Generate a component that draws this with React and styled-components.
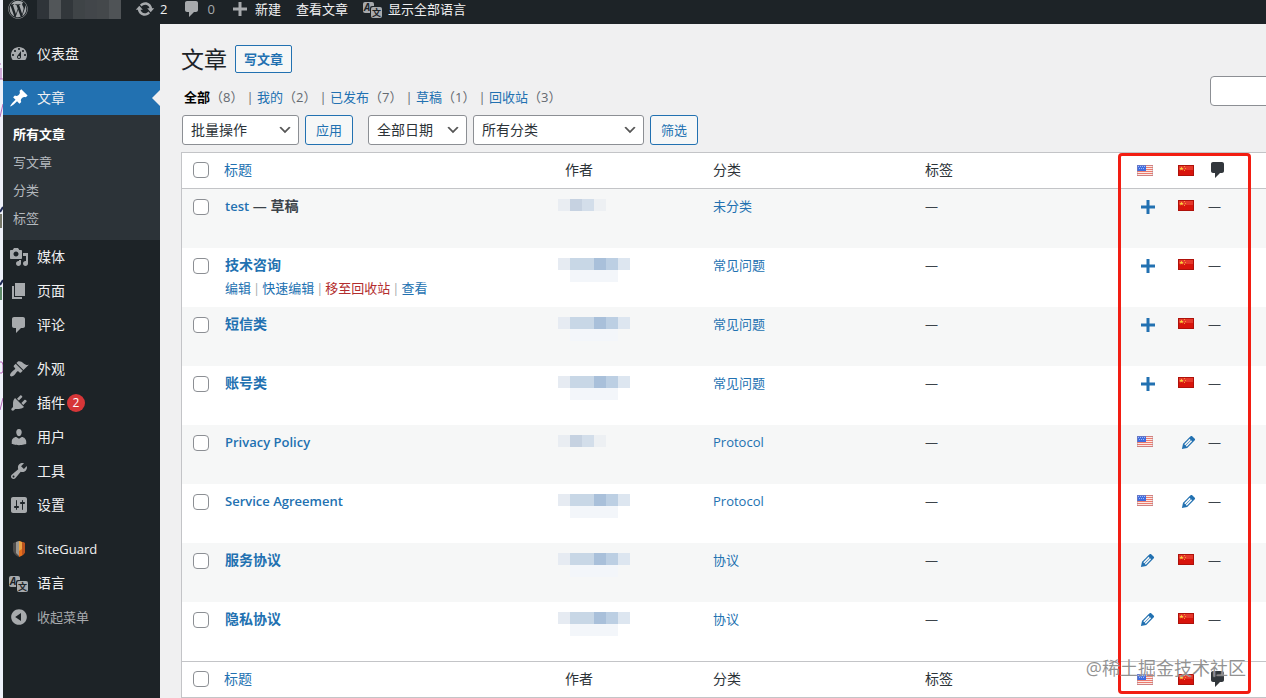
import React from 'react';
import styled, { createGlobalStyle } from 'styled-components';
import { FaWordpress } from 'react-icons/fa';

const GlobalStyle = createGlobalStyle`
  * {
    box-sizing: border-box;
  }

  body {
    margin: 0;
    background: #f0f0f1;
    color: #3c434a;
    font-family: 'Open Sans', 'Noto Sans CJK SC', sans-serif;
    font-size: 13px;
    line-height: 18px;
    overflow: hidden;
  }

  a {
    color: #2271b1;
    text-decoration: none;
  }
`;

const Page = styled.div`
  position: relative;
  min-height: 100vh;
  display: flex;
  flex-direction: column;
  border-left: 3px solid #eef1fa;
`;

const EdgeMarks = styled.svg`
  position: absolute;
  left: -3px;
  top: 0;
`;

/* admin bar */

const AdminBar = styled.header`
  height: 24px;
  padding: 0 5px 6px;
  display: flex;
  align-items: center;
  background: #1d2327;
`;

const BarLink = styled.a`
  display: flex;
  align-items: center;
  gap: 5px;
  height: 18px;
  margin-right: 15px;
  color: ${(props) => (props.$dim ? '#a7aaad' : '#f0f0f1')};
  white-space: nowrap;
`;

const SiteName = styled.div`
  display: flex;
  height: 20px;
  margin: 0 14px 0 9px;
`;

const SiteBlock = styled.span`
  width: 12px;
  height: 20px;
  background: ${(props) => props.$color};
`;

/* side menu */

const Body = styled.div`
  flex: 1;
  display: flex;
`;

const Sidebar = styled.nav`
  flex: none;
  width: 157px;
  padding-top: 13px;
  background: #1d2327;
`;

const MenuGroup = styled.div`
  margin-bottom: 10px;
`;

const MenuLink = styled.a`
  position: relative;
  display: flex;
  align-items: center;
  gap: 8px;
  height: 34px;
  padding: 0 0 1px 6px;
  font-size: ${(props) => (props.$small ? '13px' : '14px')};
  color: ${(props) => (props.$dim ? '#a7aaad' : '#f0f0f1')};
  background: ${(props) => (props.$active ? '#2271b1' : 'transparent')};

  svg {
    color: ${(props) => (props.$active ? '#fff' : '#a7aaad')};
  }

  &::after {
    content: '';
    display: ${(props) => (props.$active ? 'block' : 'none')};
    position: absolute;
    right: 0;
    top: 9px;
    border: 8px solid transparent;
    border-left: 0;
    border-right-color: #f0f0f1;
  }
`;

const MenuIcon = styled.span`
  display: flex;
  width: 20px;
  height: 20px;
  align-items: center;
  justify-content: center;
`;

const Badge = styled.span`
  width: 18px;
  height: 18px;
  margin-left: -6px;
  border-radius: 9px;
  background: #d63638;
  color: #fff;
  font-size: 12px;
  text-align: center;
`;

const SubMenu = styled.div`
  padding: 5px 0 8px;
  background: #2c3338;
`;

const SubLink = styled.a`
  display: block;
  padding: 5px 10px;
  color: ${(props) => (props.$current ? '#fff' : '#b4b9be')};
  font-weight: ${(props) => (props.$current ? 700 : 400)};
`;

/* content */

const Content = styled.main`
  flex: 1;
  min-width: 0;
  padding: 21px 0 0 21px;
`;

const TitleRow = styled.div`
  display: flex;
  align-items: center;
  gap: 8px;
  height: 28px;
`;

const Heading = styled.h1`
  margin: 0;
  color: #1d2327;
  font-size: 23px;
  font-weight: 400;
  line-height: 28px;
`;

const Button = styled.button`
  height: ${(props) => (props.$small ? '28px' : '30px')};
  padding: 0 ${(props) => (props.$small ? '8px' : '10px')};
  border: 1px solid #2271b1;
  border-radius: ${(props) => (props.$small ? '2px' : '3px')};
  background: #f6f7f7;
  color: #2271b1;
  font-family: inherit;
  font-size: 13px;
  font-weight: ${(props) => (props.$small ? 600 : 400)};
  line-height: 18px;
`;

const ViewsRow = styled.div`
  display: flex;
  align-items: flex-end;
  justify-content: space-between;
  height: 30px;
  margin-top: 3px;
  overflow: hidden;
`;

const Views = styled.ul`
  display: flex;
  gap: 3px;
  margin: 0;
  padding: 0 0 0 3px;
  list-style: none;
  color: #646970;

  b {
    color: #000;
  }
`;

const SearchInput = styled.input`
  width: 64px;
  height: 30px;
  margin-right: -8px;
  border: 1px solid #8c8f94;
  border-radius: 4px;
  background: #fff;
`;

const Filters = styled.div`
  display: flex;
  gap: 6px;
  margin: 9px 0 7px 1px;
`;

const Select = styled.select`
  width: ${(props) => props.$width};
  height: 30px;
  margin-left: ${(props) => (props.$spaced ? '9px' : '0')};
  padding: 0 24px 1px 8px;
  appearance: none;
  border: 1px solid #8c8f94;
  border-radius: 3px;
  background: #fff
    url("data:image/svg+xml,%3Csvg width='20' height='20' xmlns='http://www.w3.org/2000/svg'%3E%3Cpath d='M5 6l5 5 5-5 2 1-7 7-7-7 2-1z' fill='%23555'/%3E%3C/svg%3E")
    no-repeat right 5px center / 16px 16px;
  color: #2c3338;
  font-family: inherit;
  font-size: 14px;
`;

const TableWrap = styled.div`
  position: relative;
`;

const Table = styled.table`
  width: 100%;
  table-layout: fixed;
  border-collapse: separate;
  border-spacing: 0;
  border: 1px solid #c3c4c7;
  border-right: 0;
  background: #fff;
`;

const Head = styled.th`
  width: ${(props) => props.$width || 'auto'};
  height: 36px;
  padding: 0 0 1px 10px;
  border-bottom: ${(props) => (props.$foot ? '0' : '1px solid #c3c4c7')};
  border-top: ${(props) => (props.$foot ? '1px solid #c3c4c7' : '0')};
  color: #2c3338;
  font-size: 14px;
  font-weight: 400;
  text-align: left;
  vertical-align: middle;

  &:first-child {
    padding-left: 11px;
  }

  svg {
    display: block;
  }
`;

const Row = styled.tr`
  height: 59px;

  &:nth-child(odd) {
    background: #f6f7f7;
  }
`;

const Cell = styled.td`
  padding: ${(props) => props.$pad || '8px 0 0 10px'};
  vertical-align: top;

  svg {
    display: block;
  }
`;

const TitleCell = styled(Cell)`
  padding-left: 11px;
  font-size: 14px;
  font-weight: 600;
`;

const TitleLink = styled.a`
  font-size: ${(props) => (props.$latin ? '13px' : '14px')};
`;

const RowActions = styled.div`
  display: flex;
  gap: 2px;
  margin-top: 5px;
  color: #a7aaad;
  font-size: 13px;
  font-weight: 400;
  white-space: nowrap;
`;

const TrashLink = styled.a`
  color: #b32d2e;
`;

const CheckBox = styled.input`
  display: block;
  width: 16px;
  height: 16px;
  margin: 0;
  appearance: none;
  border: 1px solid #8c8f94;
  border-radius: 4px;
  background: #fff;
`;

const Mosaic = styled.div`
  display: flex;
  margin-left: -7px;
`;

const MosaicBlock = styled.span`
  width: 12px;
  height: 12px;
  background: ${(props) => props.$color};
  box-shadow: 0 12px 0 ${(props) => props.$shade};
`;

const Highlight = styled.div`
  position: absolute;
  top: 1px;
  right: 15px;
  bottom: 4px;
  width: 133px;
  border: 3px solid #f21d12;
  border-radius: 4px;
  pointer-events: none;
`;

const Watermark = styled.div`
  position: absolute;
  right: 20px;
  bottom: 17px;
  color: rgba(110, 110, 110, 0.75);
  font-size: 18px;
  line-height: 26px;
  text-shadow: 0 0 1px #fff;
`;

const iconPaths = {
  dashboard:
    'M3.76 16h12.48c1.1-1.37 1.76-3.11 1.76-5 0-4.42-3.58-8-8-8s-8 3.58-8 8c0 1.89.66 3.63 1.76 5zM10 4c.55 0 1 .45 1 1s-.45 1-1 1-1-.45-1-1 .45-1 1-1zM6 6c.55 0 1 .45 1 1s-.45 1-1 1-1-.45-1-1 .45-1 1-1zm8 0c.55 0 1 .45 1 1s-.45 1-1 1-1-.45-1-1 .45-1 1-1zm-5.37 5.55L12 7v6c0 1.1-.9 2-2 2s-2-.9-2-2c0-.57.24-1.08.63-1.45zM4 10c.55 0 1 .45 1 1s-.45 1-1 1-1-.45-1-1 .45-1 1-1zm12 0c.55 0 1 .45 1 1s-.45 1-1 1-1-.45-1-1 .45-1 1-1zm-5 3c0-.55-.45-1-1-1s-1 .45-1 1 .45 1 1 1 1-.45 1-1z',
  post: 'M10.44 3.02l1.82-1.82 6.36 6.35-1.83 1.82c-1.05-.68-2.48-.57-3.41.36l-.75.75c-.92.93-1.04 2.35-.35 3.41l-1.83 1.82-2.41-2.41-2.8 2.79c-.42.42-3.38 2.71-3.8 2.29s1.86-3.39 2.28-3.81l2.79-2.79L4.1 9.36l1.83-1.82c1.05.69 2.48.57 3.4-.36l.75-.75c.93-.92 1.05-2.35.36-3.41z',
  media:
    'M13 11V4c0-.55-.45-1-1-1h-1.67L9 1H5L3.67 3H2c-.55 0-1 .45-1 1v7c0 .55.45 1 1 1h10c.55 0 1-.45 1-1zM7 4.5c1.38 0 2.5 1.12 2.5 2.5S8.38 9.5 7 9.5 4.5 8.38 4.5 7 5.62 4.5 7 4.5zM14 6h5v10.5c0 1.38-1.12 2.5-2.5 2.5S14 17.88 14 16.5s1.12-2.5 2.5-2.5c.17 0 .34.02.5.05V9h-3V6zm-4 8.05V13h2v3.5c0 1.38-1.12 2.5-2.5 2.5S7 17.88 7 16.5 8.12 14 9.5 14c.17 0 .34.02.5.05z',
  page: 'M6 15V2h10v13H6zm-1 1h8v2H3V5h2v11z',
  comment:
    'M5 2h9c1.1 0 2 .9 2 2v7c0 1.1-.9 2-2 2h-2l-5 5v-5H5c-1.1 0-2-.9-2-2V4c0-1.1.9-2 2-2z',
  appearance:
    'M14.48 11.06L7.41 3.99l1.5-1.5c.5-.56 2.3-.47 3.51.32 1.21.8 1.43 1.28 2.91 2.1 1.18.64 2.45 1.26 4.45.85zm-.71.71L6.7 4.7 4.93 6.47c-.39.39-.39 1.02 0 1.41l1.06 1.06c.39.39.39 1.03 0 1.42-.6.6-1.43 1.11-2.21 1.69-.35.26-.7.53-1.01.84C1.43 14.23.4 16.08 1.4 17.07c.99 1 2.84-.03 4.18-1.36.31-.31.58-.66.85-1.02.57-.78 1.08-1.61 1.69-2.21.39-.39 1.02-.39 1.41 0l1.06 1.06c.39.39 1.02.39 1.41 0z',
  plugins:
    'M13.11 4.36L9.87 7.6 8 5.73l3.24-3.24c.35-.34 1.05-.2 1.56.32.52.51.66 1.21.31 1.55zm-8 1.77l.91-1.12 9.01 9.01-1.19.84c-.71.71-2.63 1.16-3.82 1.16H6.14L4.9 17.26c-.59.59-1.54.59-2.12 0-.59-.58-.59-1.53 0-2.12l1.24-1.24v-3.88c0-1.13.4-3.19 1.09-3.89zm7.26 3.97l3.24-3.24c.34-.35 1.04-.21 1.55.31.52.51.66 1.21.31 1.55l-3.24 3.25z',
  users:
    'M10 9.25c-2.27 0-2.73-3.44-2.73-3.44C7 4.02 7.82 2 9.97 2c2.16 0 2.98 2.02 2.71 3.81 0 0-.41 3.44-2.68 3.44zm0 2.57L12.72 10c2.39 0 4.52 2.33 4.52 4.53v2.49s-3.65 1.13-7.24 1.13c-3.65 0-7.24-1.13-7.24-1.13v-2.49c0-2.25 1.94-4.48 4.47-4.48z',
  tools:
    'M16.68 9.77c-1.34 1.34-3.3 1.67-4.95.99l-5.41 6.52c-.99.99-2.59.99-3.58 0s-.99-2.59 0-3.57l6.52-5.42c-.68-1.65-.35-3.61.99-4.95 1.28-1.28 3.12-1.62 4.72-1.06l-2.89 2.89 2.82 2.82 2.86-2.87c.53 1.58.18 3.39-1.08 4.65zM3.81 16.21c.4.39 1.04.39 1.43 0 .4-.4.4-1.04 0-1.43-.39-.4-1.03-.4-1.43 0-.39.39-.39 1.03 0 1.43z',
  settings:
    'M18 16V4c0-1.1-.9-2-2-2H4c-1.1 0-2 .9-2 2v12c0 1.1.9 2 2 2h12c1.1 0 2-.9 2-2zM8 11h1c.55 0 1 .45 1 1s-.45 1-1 1H8v1.5c0 .28-.22.5-.5.5s-.5-.22-.5-.5V13H6c-.55 0-1-.45-1-1s.45-1 1-1h1V5.5c0-.28.22-.5.5-.5s.5.22.5.5V11zm5-2h-1c-.55 0-1-.45-1-1s.45-1 1-1h1V5.5c0-.28.22-.5.5-.5s.5.22.5.5V7h1c.55 0 1 .45 1 1s-.45 1-1 1h-1v5.5c0 .28-.22.5-.5.5s-.5-.22-.5-.5V9z',
  collapse:
    'M10 2.16c4.33 0 7.84 3.51 7.84 7.84s-3.51 7.84-7.84 7.84S2.16 14.33 2.16 10 5.71 2.16 10 2.16zm2 11.72V6.12L6.18 9.97z',
  update:
    'M10.2 3.28c3.53 0 6.43 2.61 6.92 6h2.08l-3.5 4-3.5-4h2.32c-.45-1.97-2.21-3.45-4.32-3.45-1.45 0-2.73.71-3.54 1.78L4.95 5.66C6.23 4.2 8.11 3.28 10.2 3.28zm-.4 13.44c-3.52 0-6.43-2.61-6.92-6H.8l3.5-4c1.17 1.33 2.33 2.67 3.5 4H5.48c.45 1.97 2.21 3.45 4.32 3.45 1.45 0 2.73-.71 3.54-1.78l1.71 1.95c-1.28 1.46-3.15 2.38-5.25 2.38z',
  plus: 'M17 8.5v3h-5.5V17h-3v-5.5H3v-3h5.5V3h3v5.5z',
  edit: 'M13.89 3.39l2.71 2.72c.46.46.42 1.24.03 1.64l-8.01 8.02-5.56 1.16 1.16-5.58s7.6-7.63 7.99-8.03c.39-.39 1.22-.39 1.68.07zm-2.73 2.79l-5.59 5.61 1.11 1.11 5.54-5.65zm-2.97 8.23l5.58-5.6-1.07-1.08-5.59 5.6z',
};

function Icon({ name, size = 20, color = 'currentColor' }) {
  return (
    <svg width={size} height={size} viewBox="0 0 20 20" fill={color} aria-hidden="true">
      <path fillRule="evenodd" d={iconPaths[name]} />
    </svg>
  );
}

function LanguageIcon() {
  return (
    <svg width="20" height="20" viewBox="0 0 20 20" aria-hidden="true">
      <rect x="0" y="3" width="11" height="11" rx="2" fill="#a7aaad" />
      <text x="1" y="12" fontSize="10" fontWeight="700" fontStyle="italic" fill="#1d2327">A</text>
      <rect x="7" y="7" width="13" height="13" rx="2" fill="#1d2327" />
      <rect x="8" y="8" width="11" height="11" rx="2" fill="#a7aaad" />
      <text x="9" y="17" fontSize="9" fontWeight="700" fill="#1d2327">文</text>
    </svg>
  );
}

function ShieldIcon() {
  return (
    <svg width="20" height="20" viewBox="0 0 20 20" aria-hidden="true">
      <path d="M10 2L4 4v7c0 3 3 6 6 7z" fill="#4c4a49" />
      <path d="M10 2L7 3v11l3 3z" fill="#9b9690" />
      <path d="M10 2l6 2v8c0 3-3 5-6 6z" fill="#e8701c" />
      <path d="M10 2l3 1v7l-3 2z" fill="#e9a545" />
      <path d="M13 3l3 1v8c0 2-1 3-3 4z" fill="#b9521f" />
    </svg>
  );
}

function FlagUs() {
  return (
    <svg width="16" height="11" viewBox="0 0 16 11" role="img" aria-label="English">
      <rect width="16" height="11" fill="#fbe9e4" />
      {[0, 2, 4, 6, 8, 10].map((y) => (
        <rect key={y} y={y} width="16" height="1" fill="#ec7a6e" />
      ))}
      <rect width="9" height="6" fill="#3f6ce0" />
      <path d="M1 1.5h1M3 1.5h1M5 1.5h1M7 1.5h1M2 3.5h1M4 3.5h1M6 3.5h1" stroke="#9db8f7" strokeWidth="1" />
      <rect x="0.5" y="0.5" width="15" height="10" fill="none" stroke="#a58a9a" strokeOpacity="0.4" />
    </svg>
  );
}

function FlagCn() {
  return (
    <svg width="16" height="11" viewBox="0 0 16 11" role="img" aria-label="中文">
      <rect width="16" height="11" fill="#d8140c" />
      <rect x="1" y="1" width="14" height="4" fill="#e5372b" />
      <path d="M3.5 1.5l.6 1.4h1.5l-1.2 1 .5 1.5-1.4-.9-1.4.9.5-1.5-1.2-1h1.5z" fill="#fbd33c" />
      <path d="M6 1h1v1H6zM7 3h1v1H7zM6 5h1v1H6z" fill="#f59a2e" />
      <rect x="0.5" y="0.5" width="15" height="10" fill="none" stroke="#9c0f0a" strokeOpacity="0.7" />
    </svg>
  );
}

const menuGroups = [
  [
    { icon: 'media', label: '媒体' },
    { icon: 'page', label: '页面' },
    { icon: 'comment', label: '评论' },
  ],
  [
    { icon: 'appearance', label: '外观' },
    { icon: 'plugins', label: '插件', badge: 2 },
    { icon: 'users', label: '用户' },
    { icon: 'tools', label: '工具' },
    { icon: 'settings', label: '设置' },
  ],
  [
    { icon: 'shield', label: 'SiteGuard', small: true },
    { icon: 'language', label: '语言' },
    { icon: 'collapse', label: '收起菜单', dim: true, small: true },
  ],
];

const views = [
  { label: '全部', count: 8, current: true },
  { label: '我的', count: 2 },
  { label: '已发布', count: 7 },
  { label: '草稿', count: 1 },
  { label: '回收站', count: 3 },
];

const posts = [
  { title: 'test', draft: true, latin: true, category: '未分类', us: 'plus', cn: 'flag', short: true },
  { title: '技术咨询', category: '常见问题', us: 'plus', cn: 'flag', actions: true },
  { title: '短信类', category: '常见问题', us: 'plus', cn: 'flag' },
  { title: '账号类', category: '常见问题', us: 'plus', cn: 'flag' },
  { title: 'Privacy Policy', latin: true, category: 'Protocol', us: 'flag', cn: 'edit', short: true },
  { title: 'Service Agreement', latin: true, category: 'Protocol', us: 'flag', cn: 'edit' },
  { title: '服务协议', category: '协议', us: 'edit', cn: 'flag' },
  { title: '隐私协议', category: '协议', us: 'edit', cn: 'flag' },
];

const siteColors = ['#2f3439', '#525659', '#32373b', '#3f4447', '#42464a', '#44484b', '#4f5356'];
const longMosaic = ['#e6ebf2', '#c8d7e6', '#c8d7e6', '#a9c0da', '#bccfe3', '#dde6f0'];
const shortMosaic = ['#e9edf2', '#c6d2e1', '#d3deea', '#edf0f3'];

function MenuItem({ item, active }) {
  let icon = <Icon name={item.icon} />;
  if (item.icon === 'shield') icon = <ShieldIcon />;
  if (item.icon === 'language') icon = <LanguageIcon />;
  return (
    <MenuLink href="#" $active={active} $dim={item.dim} $small={item.small}>
      <MenuIcon>{icon}</MenuIcon>
      {item.label}
      {item.badge && <Badge>{item.badge}</Badge>}
    </MenuLink>
  );
}

function HeadRow({ foot }) {
  return (
    <tr>
      <Head $foot={foot} $width="32px">
        <CheckBox type="checkbox" aria-label="全选" />
      </Head>
      <Head $foot={foot}>
        <a href="#">标题</a>
      </Head>
      <Head $foot={foot} $width="148px">作者</Head>
      <Head $foot={foot} $width="212px">分类</Head>
      <Head $foot={foot} $width="212px">标签</Head>
      <Head $foot={foot} $width="41px"><FlagUs /></Head>
      <Head $foot={foot} $width="30px"><FlagCn /></Head>
      <Head $foot={foot} $width="68px">
        <Icon name="comment" color="#32373c" />
      </Head>
    </tr>
  );
}

function LangCell({ type, title, us }) {
  if (type === 'flag') {
    return (
      <Cell $pad="11px 0 0 10px">
        {us ? <FlagUs /> : <FlagCn />}
      </Cell>
    );
  }
  return (
    <Cell $pad="8px 0 0 11px">
      <a href="#" aria-label={title}>
        <Icon name={type} size={type === 'edit' ? 19 : 20} />
      </a>
    </Cell>
  );
}

function PostRow({ post }) {
  const colors = post.short ? shortMosaic : longMosaic;
  return (
    <Row>
      <Cell $pad="10px 0 0 11px">
        <CheckBox type="checkbox" aria-label={post.title} />
      </Cell>
      <TitleCell>
        <TitleLink href="#" $latin={post.latin}>{post.title}</TitleLink>
        {post.draft && ' — 草稿'}
        {post.actions && (
          <RowActions>
            <a href="#">编辑</a>|<a href="#">快速编辑</a>|<TrashLink href="#">移至回收站</TrashLink>|<a href="#">查看</a>
          </RowActions>
        )}
      </TitleCell>
      <Cell $pad="10px 0 0 10px">
        <Mosaic>
          {colors.map((color, i) => (
            <MosaicBlock
              key={i}
              $color={color}
              $shade={!post.short && i > 0 && i < 5 ? '#f3f6fa' : 'transparent'}
            />
          ))}
        </Mosaic>
      </Cell>
      <Cell>
        <a href="#">{post.category}</a>
      </Cell>
      <Cell>—</Cell>
      <LangCell us type={post.us} title={post.title} />
      <LangCell type={post.cn} title={post.title} />
      <Cell>—</Cell>
    </Row>
  );
}

function App() {
  return (
    <Page>
      <GlobalStyle />
      <EdgeMarks width="3" height="420" viewBox="0 0 3 420" fill="none" aria-hidden="true">
        <path d="M0 64h1M1 68v11M0 79h3M3 104L0 117M0 362h2l1 3v6l-1 2H0M3 398l-3 12" stroke="#b565b8" />
        <path d="M3 207l-3 5M3 280l-3 5" stroke="#1f2a55" strokeWidth="2" />
        <path d="M0 214h2v14H0z" fill="#77786a" />
        <path d="M0 287h2v13H0z" fill="#5f8b6a" />
      </EdgeMarks>
      <AdminBar>
        <FaWordpress size={20} color="#a7aaad" />
        <SiteName>
          {siteColors.map((color, i) => (
            <SiteBlock key={i} $color={color} />
          ))}
        </SiteName>
        <BarLink href="#"><Icon name="update" color="#a7aaad" />2</BarLink>
        <BarLink href="#" $dim><Icon name="comment" />0</BarLink>
        <BarLink href="#"><Icon name="plus" color="#a7aaad" />新建</BarLink>
        <BarLink href="#">查看文章</BarLink>
        <BarLink href="#"><LanguageIcon />显示全部语言</BarLink>
      </AdminBar>
      <Body>
        <Sidebar>
          <MenuGroup>
            <MenuItem item={{ icon: 'dashboard', label: '仪表盘' }} />
          </MenuGroup>
          <MenuItem active item={{ icon: 'post', label: '文章' }} />
          <SubMenu>
            <SubLink href="#" $current>所有文章</SubLink>
            <SubLink href="#">写文章</SubLink>
            <SubLink href="#">分类</SubLink>
            <SubLink href="#">标签</SubLink>
          </SubMenu>
          {menuGroups.map((group, i) => (
            <MenuGroup key={i}>
              {group.map((item) => (
                <MenuItem key={item.label} item={item} />
              ))}
            </MenuGroup>
          ))}
        </Sidebar>
        <Content>
          <TitleRow>
            <Heading>文章</Heading>
            <Button $small>写文章</Button>
          </TitleRow>
          <ViewsRow>
            <Views>
              {views.map((view, i) => (
                <li key={view.label}>
                  {i > 0 && '| '}
                  {view.current ? <b>{view.label}</b> : <a href="#">{view.label}</a>}
                  （{view.count}）
                </li>
              ))}
            </Views>
            <SearchInput type="search" aria-label="搜索文章" />
          </ViewsRow>
          <Filters>
            <Select $width="117px" aria-label="批量操作">
              <option>批量操作</option>
            </Select>
            <Button>应用</Button>
            <Select $width="99px" $spaced aria-label="全部日期">
              <option>全部日期</option>
            </Select>
            <Select $width="171px" aria-label="所有分类">
              <option>所有分类</option>
            </Select>
            <Button>筛选</Button>
          </Filters>
          <TableWrap>
            <Table>
              <thead>
                <HeadRow />
              </thead>
              <tbody>
                {posts.map((post) => (
                  <PostRow key={post.title} post={post} />
                ))}
              </tbody>
              <tfoot>
                <HeadRow foot />
              </tfoot>
            </Table>
            <Highlight />
            <Watermark>@稀土掘金技术社区</Watermark>
          </TableWrap>
        </Content>
      </Body>
    </Page>
  );
}

export default App;
